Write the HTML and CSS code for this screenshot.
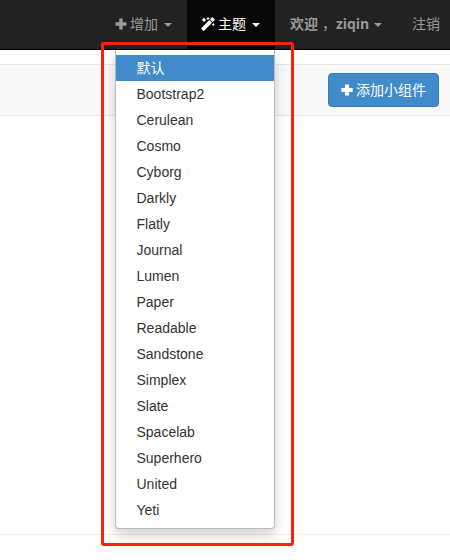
FILE: index.html
```
<!DOCTYPE html>
<html lang="zh">
<head>
<meta charset="utf-8">
<title>主题</title>
<link rel="stylesheet" href="styles.css">
</head>
<body>
<nav class="navbar">
  <a class="nav-item add"><svg class="icon" width="12" height="12" viewBox="0 0 12 12"><path d="M4.3 .5h3.4v3.8h3.8v3.4H7.7v3.8H4.3V7.7H.5V4.3h3.8z"/></svg><span class="label">增加</span><b class="caret"></b></a>
  <div class="nav-item theme active"><svg class="icon wand" width="14" height="14" viewBox="0 0 14 14"><path d="M0 11.4 8.3 3.1l2.7 2.7-8.3 8.3zM9 2.4 11.3.1 14 2.8l-2.3 2.3zM3 .2l.9 1.8 1.8.9-1.8.9L3 5.6l-.9-1.8-1.8-.9L2.1 2zM7 0l.6 1.1 1.1.5-1.1.6L7 3.3l-.6-1.1-1.1-.6 1.1-.5zM12.3 5.8l.5 1.2 1.2.6-1.2.6-.5 1.2-.6-1.2-1.2-.6 1.2-.6z"/></svg><span class="label">主题</span><b class="caret"></b>
    <ul class="menu">
      <li class="selected">默认</li>
      <li>Bootstrap2</li>
      <li>Cerulean</li>
      <li>Cosmo</li>
      <li>Cyborg</li>
      <li>Darkly</li>
      <li>Flatly</li>
      <li>Journal</li>
      <li>Lumen</li>
      <li>Paper</li>
      <li>Readable</li>
      <li>Sandstone</li>
      <li>Simplex</li>
      <li>Slate</li>
      <li>Spacelab</li>
      <li>Superhero</li>
      <li>United</li>
      <li>Yeti</li>
    </ul>
  </div>
  <a class="nav-item user"><strong class="label">欢迎<span class="comma">，</span> <span class="name">ziqin</span></strong><b class="caret"></b></a>
  <a class="nav-item logout">注销</a>
</nav>
<div class="toolbar">
  <button class="button"><svg class="icon" width="12" height="12" viewBox="0 0 12 12"><path d="M4 .5h4v3.6h3.7v3.8H8v3.6H4V7.9H.3V4.1H4z"/></svg><span>添加小组件</span></button>
</div>
<main class="content"></main>
<div class="highlight"></div>
</body>
</html>
```
FILE: styles.css
```
* { box-sizing: border-box; }
body {
  margin: 0;
  height: 560px;
  overflow: hidden;
  background: #fff;
  color: #333;
  font: 14px/20px "Liberation Sans", "Noto Sans CJK SC", sans-serif;
}
.navbar {
  display: flex;
  height: 50px;
  padding-left: 100px;
  background: #222;
  border-bottom: 1px solid #000;
}
.nav-item {
  position: relative;
  display: flex;
  flex: none;
  align-items: center;
  height: 49px;
  padding: 0 15px 2px;
  color: #999;
  white-space: nowrap;
}
.add { width: 87px; }
.theme { width: 88px; }
.user { width: 122px; }
.active { background: #080808; color: #fff; }
.icon { flex: none; fill: currentColor; margin-right: 3px; }
.wand { margin-left: -1px; }
.caret {
  margin: 2px 0 0 6px;
  border-top: 4px solid;
  border-left: 4px solid transparent;
  border-right: 4px solid transparent;
}
.user .caret { margin-left: 5px; }
.comma { margin: 0 -4px 0 4px; font-weight: 400; }
.name { font-family: "Open Sans", sans-serif; }
.menu {
  position: absolute;
  top: 50px;
  right: 0;
  z-index: 1;
  width: 160px;
  margin: 0;
  padding: 5px 0;
  list-style: none;
  color: #333;
  background: #fff;
  border: 1px solid #bbb;
  border-top: 0;
  border-radius: 0 0 4px 4px;
  box-shadow: 0 6px 12px rgba(0, 0, 0, .175);
}
.menu li { height: 26px; padding: 3px 20.5px; }
.menu .selected { background: #428bca; color: #fff; }
.toolbar {
  display: flex;
  justify-content: flex-end;
  height: 52px;
  margin-top: 14px;
  padding: 8px 11px 0 0;
  background: #f8f8f8;
  border: solid #e7e7e7;
  border-width: 1px 0;
}
.button {
  display: flex;
  align-items: center;
  width: 111px;
  height: 34px;
  padding: 0 12px 1px;
  color: #fff;
  background: #428bca;
  border: 1px solid #357ebd;
  border-radius: 4px;
  font: inherit;
  white-space: nowrap;
}
.content { height: 419px; border-bottom: 1px solid #eee; }
.highlight {
  position: absolute;
  left: 101px;
  top: 42px;
  z-index: 2;
  width: 193px;
  height: 504px;
  border: 3px solid #ff1f0f;
  border-radius: 3px;
}
```
